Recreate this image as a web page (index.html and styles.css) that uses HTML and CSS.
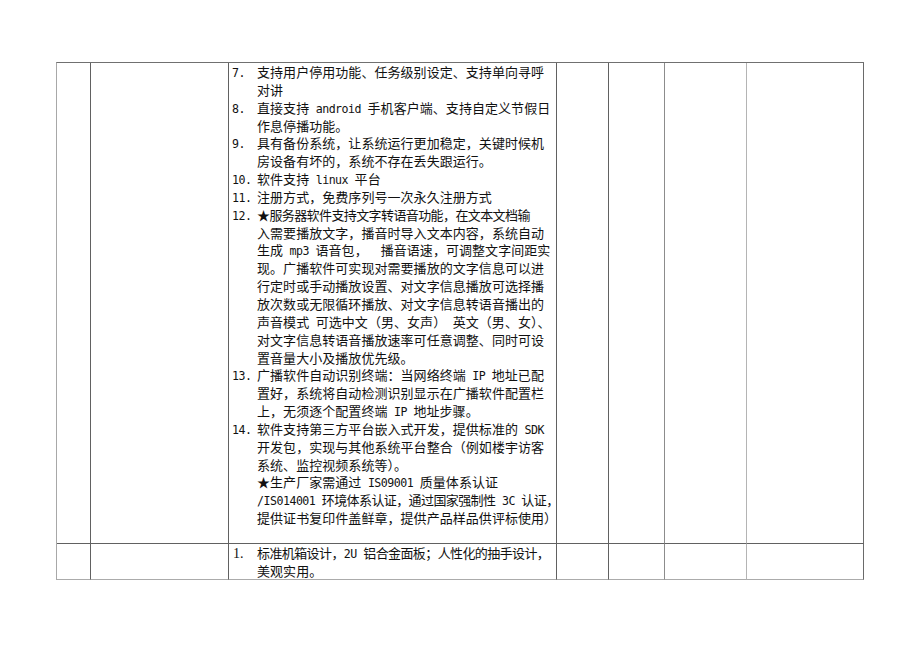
FILE: index.html
```html
<!DOCTYPE html>
<html lang="zh-CN">
<head>
<meta charset="utf-8">
<title>技术参数表</title>
<link rel="stylesheet" href="styles.css">
</head>
<body>
<div class="sheet">
  <div class="cell c1"></div>
  <div class="cell c2"></div>
  <div class="cell c3">
    <div class="list">
      <div class="item"><span class="num">7.</span><span class="body">支持用户停用功能、任务级别设定、支持单向寻呼<br>对讲</span></div>
      <div class="item"><span class="num">8.</span><span class="body">直接支持<span class="en"> android </span>手机客户端、支持自定义节假日<br>作息停播功能。</span></div>
      <div class="item"><span class="num">9.</span><span class="body">具有备份系统，让系统运行更加稳定，关键时候机<br>房设备有坏的，系统不存在丢失跟运行。</span></div>
      <div class="item"><span class="num">10.</span><span class="body">软件支持<span class="en"> linux </span>平台</span></div>
      <div class="item"><span class="num">11.</span><span class="body">注册方式，免费序列号一次永久注册方式</span></div>
      <div class="item"><span class="num">12.</span><span class="body"><span class="tight">★服务器软件支持文字转语音功能，在文本文档输</span><br>入需要播放文字，播音时导入文本内容，系统自动<br>生成<span class="en"> mp3 </span>语音包，<span class="en">&nbsp; </span>播音语速，可调整文字间距实<br>现。广播软件可实现对需要播放的文字信息可以进<br>行定时或手动播放设置、对文字信息播放可选择播<br>放次数或无限循环播放、对文字信息转语音播出的<br>声音模式<span class="en"> </span>可选中文（男、女声）<span class="en"> </span>英文（男、女）、<br>对文字信息转语音播放速率可任意调整、同时可设<br>置音量大小及播放优先级。</span></div>
      <div class="item"><span class="num">13.</span><span class="body">广播软件自动识别终端：当网络终端<span class="en"> IP </span>地址已配<br>置好，系统将自动检测识别显示在广播软件配置栏<br>上，无须逐个配置终端<span class="en"> IP </span>地址步骤。</span></div>
      <div class="item"><span class="num">14.</span><span class="body">软件支持第三方平台嵌入式开发，提供标准的<span class="en"> SDK</span><br>开发包，实现与其他系统平台整合（例如楼宇访客<br>系统、监控视频系统等）。<br>★生产厂家需通过<span class="en"> IS09001 </span>质量体系认证<br><span class="tight"><span class="en">/IS014001 </span>环境体系认证，通过国家强制性<span class="en"> 3C </span>认证，</span><br>提供证书复印件盖鲜章，提供产品样品供评标使用）</span></div>
    </div>
  </div>
  <div class="cell c4"></div>
  <div class="cell c5"></div>
  <div class="cell c6"></div>
  <div class="cell c7"></div>

  <div class="cell c1 last"></div>
  <div class="cell c2 last"></div>
  <div class="cell c3 last">
    <div class="list">
      <div class="item"><span class="num serif">1.</span><span class="body"><span class="tight">标准机箱设计，<span class="en">2U </span>铝合金面板；人性化的抽手设计，</span><br>美观实用。</span></div>
    </div>
  </div>
  <div class="cell c4 last"></div>
  <div class="cell c5 last"></div>
  <div class="cell c6 last"></div>
  <div class="cell c7 last"></div>
</div>
</body>
</html>
```
FILE: styles.css
```css
html, body {
  margin: 0;
  padding: 0;
  background: #ffffff;
}

body {
  font-family: "Noto Sans CJK SC", sans-serif;
  color: #111111;
}

.sheet {
  display: grid;
  grid-template-columns: 34px 138px 328px 52px 56px 82px 117px;
  grid-template-rows: 481px 36px;
  width: max-content;
  margin: 62px 0 0 56px;
  border-top: 1px solid #707070;
  border-left: 1px solid #a8a8a8;
}

.cell {
  box-sizing: border-box;
  border-right: 1px solid #616161;
  border-bottom: 1px solid #616161;
}

.c5 {
  border-right-color: #8c8c8c;
}

.c6 {
  border-right-color: #b4b4b4;
}

.c7 {
  border-right-color: #6a6a6a;
}

.last {
  border-bottom-color: #ababab;
}

.list {
  padding-left: 3px;
  font-size: 13px;
  letter-spacing: 0.05px;
  line-height: 17.84px;
  white-space: nowrap;
}

.item {
  display: flex;
  align-items: baseline;
}

.num {
  flex: none;
  width: 25px;
  font-family: "DejaVu Sans Mono", monospace;
  font-size: 11.6px;
  line-height: 1;
  letter-spacing: -0.5px;
}

.num.serif {
  font-family: "Liberation Serif", serif;
  font-size: 14px;
  letter-spacing: 0;
  padding-left: 1px;
  width: 24px;
}

.en {
  font-family: "DejaVu Sans Mono", monospace;
  font-size: 11.6px;
  line-height: 1;
  letter-spacing: -0.5px;
}

.tight {
  letter-spacing: -0.6px;
}

.tight .en {
  letter-spacing: -0.5px;
}
```
